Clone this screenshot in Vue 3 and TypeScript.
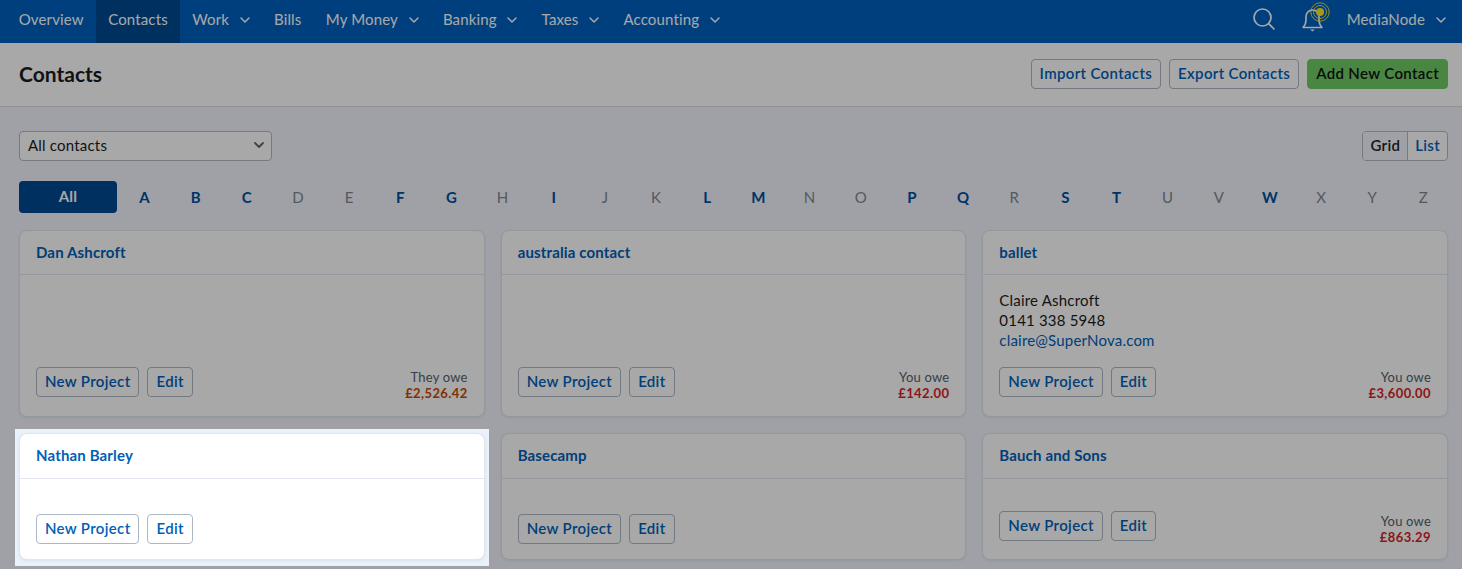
<script setup lang="ts">
type NavItem = { label: string; caret?: boolean; active?: boolean }
type Owe = { label: string; amount: string; kind: 'they' | 'you' }
type Contact = {
  name: string
  person?: string
  phone?: string
  email?: string
  owe?: Owe
  spotlight?: boolean
}

const navItems: NavItem[] = [
  { label: 'Overview' },
  { label: 'Contacts', active: true },
  { label: 'Work', caret: true },
  { label: 'Bills' },
  { label: 'My Money', caret: true },
  { label: 'Banking', caret: true },
  { label: 'Taxes', caret: true },
  { label: 'Accounting', caret: true },
]

const enabled = 'ABCFGILMPQSTW'
const letters = 'ABCDEFGHIJKLMNOPQRSTUVWXYZ'.split('')

const contacts: Contact[] = [
  { name: 'Dan Ashcroft', owe: { label: 'They owe', amount: '£2,526.42', kind: 'they' } },
  { name: 'australia contact', owe: { label: 'You owe', amount: '£142.00', kind: 'you' } },
  {
    name: 'ballet',
    person: 'Claire Ashcroft',
    phone: '0141 338 5948',
    email: 'claire@SuperNova.com',
    owe: { label: 'You owe', amount: '£3,600.00', kind: 'you' },
  },
  { name: 'Nathan Barley', spotlight: true },
  { name: 'Basecamp' },
  { name: 'Bauch and Sons', owe: { label: 'You owe', amount: '£863.29', kind: 'you' } },
]
</script>

<template>
  <div class="page">
    <header class="nav">
      <ul class="navList">
        <li v-for="n in navItems" :key="n.label" class="navItem" :data-active="n.active ? '1' : '0'">
          {{ n.label }}
          <svg v-if="n.caret" class="caret" width="10" height="6" viewBox="0 0 10 6">
            <path d="M1 1l4 4 4-4" fill="none" stroke="currentColor" stroke-width="1.5" stroke-linecap="round" stroke-linejoin="round" />
          </svg>
        </li>
      </ul>
      <div class="navRight">
        <svg class="searchIcon" width="24" height="24" viewBox="0 0 24 24">
          <circle cx="10.5" cy="10.5" r="8.5" fill="none" stroke="currentColor" stroke-width="1.7" />
          <path d="M16.8 16.8l5.2 5.2" fill="none" stroke="currentColor" stroke-width="1.7" stroke-linecap="round" />
        </svg>
        <svg class="bellIcon" width="34" height="32" viewBox="0 0 34 32">
          <path d="M2 25.500c2-2 3-3.500 3-7.500v-3c0-4 2.700-7 6.500-7s6.500 3 6.500 7v3c0 4 1 5.500 3 7.500z" fill="none" stroke="currentColor" stroke-width="1.600" stroke-linejoin="round" />
          <path d="M9 27.500h5l-2.500 2z" fill="currentColor" />
          <circle cx="19" cy="10" r="4" fill="#fde52f" />
          <circle cx="19" cy="10" r="6.500" fill="none" stroke="#fde52f" stroke-width="0.9" />
          <circle cx="19" cy="10" r="9.200" fill="none" stroke="#fde52f" stroke-width="0.9" />
        </svg>
        <span class="account">MediaNode</span>
        <svg class="caret" width="10" height="6" viewBox="0 0 10 6">
          <path d="M1 1l4 4 4-4" fill="none" stroke="currentColor" stroke-width="1.5" stroke-linecap="round" stroke-linejoin="round" />
        </svg>
      </div>
    </header>

    <div class="titleBar">
      <h1 class="title">Contacts</h1>
      <div class="titleActions">
        <button class="btn" type="button">Import Contacts</button>
        <button class="btn" type="button">Export Contacts</button>
        <button class="btn btnGreen" type="button">Add New Contact</button>
      </div>
    </div>

    <main class="main">
      <div class="filterRow">
        <div class="select">
          <span>All contacts</span>
          <svg width="10" height="6" viewBox="0 0 10 6">
            <path d="M1 1l4 4 4-4" fill="none" stroke="#666" stroke-width="1.8" stroke-linecap="round" stroke-linejoin="round" />
          </svg>
        </div>
        <div class="seg">
          <span class="segItem" data-active="1">Grid</span>
          <span class="segItem" data-active="0">List</span>
        </div>
      </div>

      <div class="alpha">
        <span class="alphaAll">All</span>
        <div class="alphaLetters">
          <span
            v-for="l in letters"
            :key="l"
            class="letter"
            :data-on="enabled.includes(l) ? '1' : '0'"
          >{{ l }}</span>
        </div>
      </div>

      <div class="grid">
        <div v-for="c in contacts" :key="c.name" class="cell" :class="{ spotlight: c.spotlight }">
          <article class="card">
            <div class="cardHead">{{ c.name }}</div>
            <div class="cardBody">
              <div class="info">
                <div v-if="c.person">{{ c.person }}</div>
                <div v-if="c.phone">{{ c.phone }}</div>
                <a v-if="c.email" class="mail">{{ c.email }}</a>
              </div>
              <div class="cardFoot">
                <div class="cardBtns">
                  <button class="btn" type="button">New Project</button>
                  <button class="btn" type="button">Edit</button>
                </div>
                <div v-if="c.owe" class="owe">
                  <div class="oweLabel">{{ c.owe.label }}</div>
                  <div class="oweAmount" :data-kind="c.owe.kind">{{ c.owe.amount }}</div>
                </div>
              </div>
            </div>
          </article>
        </div>
      </div>
    </main>
  </div>
</template>

<style>
html,
body {
  margin: 0;
  height: 569px;
  overflow: hidden;
  background: #f1f5fd;
}
</style>

<style scoped>
.page {
  font-family: Lato, "Open Sans", sans-serif;
  font-size: 15px;
  letter-spacing: 0.2px;
  color: #1c1c1c;
  height: 569px;
  overflow: hidden;
  background: #f1f5fd;
}
.nav {
  display: flex;
  justify-content: space-between;
  height: 43px;
  background: #0060c0;
  color: #fff;
  letter-spacing: 0.15px;
}
.navList {
  display: flex;
  list-style: none;
  margin: 0;
  padding: 0 0 0 6.5px;
}
.navItem {
  display: flex;
  align-items: center;
  gap: 10.5px;
  padding: 0 12.2px 6px;
  white-space: nowrap;
}
.navItem[data-active='1'] {
  background: #004a92;
}
.caret {
  margin-top: 3px;
}
.navRight {
  display: flex;
  align-items: center;
  padding: 0 16px 6px 0;
}
.searchIcon {
  margin-right: 25px;
}
.bellIcon {
  margin-right: 12px;
  margin-top: -2px;
}
.account {
  margin-right: 11px;
}
.titleBar {
  display: flex;
  align-items: center;
  justify-content: space-between;
  height: 61px;
  padding: 0 14px 2px 19px;
  background: #fff;
  border-bottom: 1px solid #d9dde3;
}
.title {
  margin: 0;
  font-size: 21px;
  font-weight: 700;
  letter-spacing: 0;
}
.titleActions {
  display: flex;
  gap: 8px;
}
.btn {
  height: 30px;
  padding: 0 8px 2px;
  font: inherit;
  font-weight: 600;
  letter-spacing: 0.34px;
  color: #0060b8;
  background: #fff;
  border: 1px solid #aeb8c4;
  border-radius: 4px;
  box-sizing: border-box;
  white-space: nowrap;
}
.btnGreen {
  background: #70cb64;
  border-color: #70cb64;
  color: #111;
}
.main {
  padding: 24px 14px 0 19px;
}
.filterRow {
  display: flex;
  justify-content: space-between;
}
.select {
  display: flex;
  align-items: center;
  justify-content: space-between;
  width: 253px;
  height: 30px;
  padding: 0 7px 2px 8px;
  border: 1px solid #b4bac2;
  border-radius: 4px;
  background: #fff;
  box-sizing: border-box;
}
.seg {
  display: flex;
  height: 30px;
  border: 1px solid #b4bac2;
  border-radius: 4px;
  box-sizing: border-box;
  overflow: hidden;
  background: #fff;
  font-weight: 600;
  letter-spacing: 0.32px;
}
.segItem {
  display: flex;
  align-items: center;
  padding: 0 7px 2px;
  color: #0060b8;
}
.segItem[data-active='1'] {
  background: #f1f5fd;
  color: #222;
  border-right: 1px solid #b4bac2;
}
.alpha {
  display: flex;
  align-items: center;
  margin-top: 20px;
}
.alphaAll {
  flex: none;
  display: flex;
  align-items: center;
  justify-content: center;
  width: 98px;
  height: 32px;
  border-radius: 4px;
  background: #004a92;
  color: #fff;
  font-weight: 700;
  padding-bottom: 2px;
  box-sizing: border-box;
}
.alphaLetters {
  flex: none;
  display: flex;
  margin-left: 2px;
}
.letter {
  width: 51.17px;
  text-align: center;
  color: #80878f;
}
.letter[data-on='1'] {
  color: #004e9c;
  font-weight: 700;
}
.grid {
  display: grid;
  grid-template-columns: repeat(3, 1fr);
  gap: 16.4px 16px;
  margin-top: 17px;
}
.cell {
  display: flex;
}
.card {
  flex: 1;
  display: flex;
  flex-direction: column;
  background: #fff;
  border: 1px solid #e1e5ee;
  border-radius: 8px;
  box-shadow: 0 1px 3px rgba(40, 60, 90, 0.08);
}
.spotlight {
  position: relative;
  z-index: 1;
}
.spotlight::before {
  content: '';
  position: absolute;
  inset: -4px -4px -6px -4px;
  z-index: -1;
  background: #e9f1fb;
  box-shadow: 0 0 0 3000px rgba(0, 0, 0, 0.34);
}
.cardHead {
  height: 43.3px;
  line-height: 42.6px;
  padding: 0 16px;
  font-weight: 700;
  letter-spacing: 0.15px;
  color: #0060b8;
  border-bottom: 1px solid #e1e5ee;
}
.cardBody {
  flex: 1;
  display: flex;
  flex-direction: column;
  padding: 16px 16px 15.5px;
}
.info {
  line-height: 20px;
  margin-bottom: 16px;
  margin-top: -1px;
  padding-bottom: 1px;
}
.mail {
  display: block;
  color: #0060b8;
}
.cardFoot {
  display: flex;
  justify-content: space-between;
  align-items: flex-start;
  margin-top: auto;
}
.cardBtns {
  display: flex;
  gap: 8px;
}
.owe {
  height: 33.1px;
  text-align: right;
  font-size: 13px;
  line-height: 16px;
  padding-top: 2px;
  box-sizing: border-box;
}
.oweLabel {
  color: #54606e;
}
.oweAmount {
  font-weight: 700;
  letter-spacing: 0.4px;
}
.oweAmount[data-kind='they'] {
  color: #c44a00;
}
.oweAmount[data-kind='you'] {
  color: #d81e26;
}
</style>
